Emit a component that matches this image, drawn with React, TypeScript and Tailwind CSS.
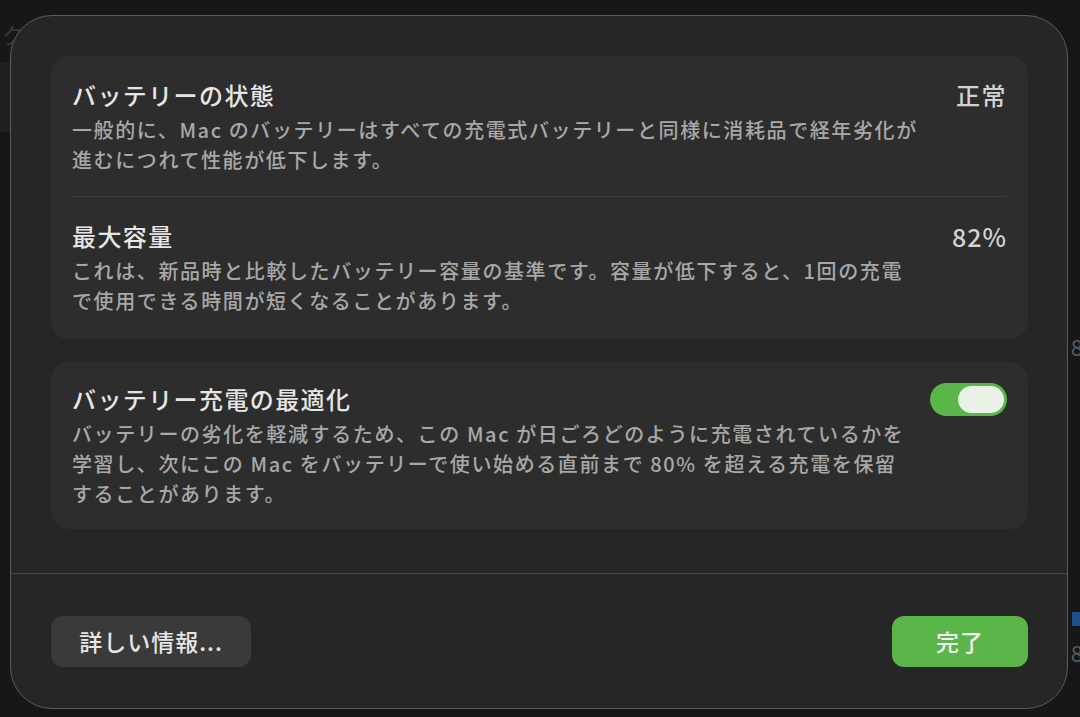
import React from "react";

const font = { fontFamily: '"Noto Sans CJK JP", "Noto Sans", sans-serif' };

function Title({ children }: { children: React.ReactNode }) {
  return (
    <div className="text-[24px] leading-[32px] font-medium tracking-[1.4px] text-[#e6e6e6] whitespace-nowrap">
      {children}
    </div>
  );
}

function Desc({ lines }: { lines: string[] }) {
  return (
    <div className="mt-[4px] text-[20px] leading-[30px] font-medium tracking-[1.6px] text-[#a8a8a8] whitespace-nowrap">
      {lines.map((l, i) => (
        <div key={i}>{l}</div>
      ))}
    </div>
  );
}

function Toggle() {
  return (
    <div className="w-[77px] h-[33px] rounded-full bg-[#5bb548] flex items-center justify-end pr-[3px]">
      <div className="w-[46px] h-[27px] rounded-full bg-[#eaf2e8]" />
    </div>
  );
}

export default function App() {
  return (
    <div style={font} className="w-[1080px] h-[717px] bg-[#171717] relative overflow-hidden">
      {/* background fragments */}
      <div className="absolute left-0 top-[62px] w-[10px] h-[70px] bg-[#202020]" />
      <div className="absolute left-[2px] top-[18px] text-[22px] text-[#3a3a3a]">ク</div>
      <div className="absolute right-[-3px] top-[330px] text-[22px] text-[#5a5a5a]">8</div>
      <div className="absolute right-0 top-[612px] w-[8px] h-[14px] bg-[#1f4f8a]" />
      <div className="absolute right-[-3px] top-[636px] text-[22px] text-[#5a5a5a]">8</div>

      <div className="absolute left-[10px] top-[15px] w-[1058px] h-[694px] rounded-[42px] border border-[#5c5c5c] bg-[#262626] flex flex-col overflow-hidden">
        <div className="pl-[40px] pr-[39px] pt-[40px] flex flex-col gap-[23px]">
          {/* Card 1 */}
          <div className="rounded-[18px] bg-[#2d2d2d] px-[21px]">
            <div className="pt-[23px] pb-[21px] flex justify-between">
              <div>
                <Title>バッテリーの状態</Title>
                <Desc
                  lines={[
                    "一般的に、Mac のバッテリーはすべての充電式バッテリーと同様に消耗品で経年劣化が",
                    "進むにつれて性能が低下します。",
                  ]}
                />
              </div>
              <div className="text-[24px] leading-[32px] font-medium tracking-[1.5px] text-[#d2d2d2]">正常</div>
            </div>
            <div className="h-px bg-[#3a3a3a]" />
            <div className="pt-[23px] pb-[23px] flex justify-between">
              <div>
                <Title>最大容量</Title>
                <Desc
                  lines={[
                    "これは、新品時と比較したバッテリー容量の基準です。容量が低下すると、1回の充電",
                    "で使用できる時間が短くなることがあります。",
                  ]}
                />
              </div>
              <div className="text-[25px] leading-[32px] font-medium tracking-[1px] text-[#d2d2d2]">82%</div>
            </div>
          </div>

          {/* Card 2 */}
          <div className="rounded-[18px] bg-[#2d2d2d] px-[21px] pt-[21px] pb-[20px] flex justify-between">
            <div>
              <Title>バッテリー充電の最適化</Title>
              <Desc
                lines={[
                  "バッテリーの劣化を軽減するため、この Mac が日ごろどのように充電されているかを",
                  "学習し、次にこの Mac をバッテリーで使い始める直前まで 80% を超える充電を保留",
                  "することがあります。",
                ]}
              />
            </div>
            <div>
              <Toggle />
            </div>
          </div>
        </div>

        <div className="mt-[44px] h-px bg-[#444444]" />

        <div className="pl-[40px] pr-[39px] pt-[42px] flex justify-between">
          <div className="h-[51px] w-[200px] rounded-[12px] bg-[#3a3a3a] flex items-center justify-center text-[23px] font-medium tracking-[1px] text-[#e6e6e6]">
            詳しい情報...
          </div>
          <div className="h-[51px] w-[136px] rounded-[12px] bg-[#5bb548] flex items-center justify-center text-[23px] font-medium tracking-[1px] text-[#f2f2f2]">
            完了
          </div>
        </div>
      </div>
    </div>
  );
}
